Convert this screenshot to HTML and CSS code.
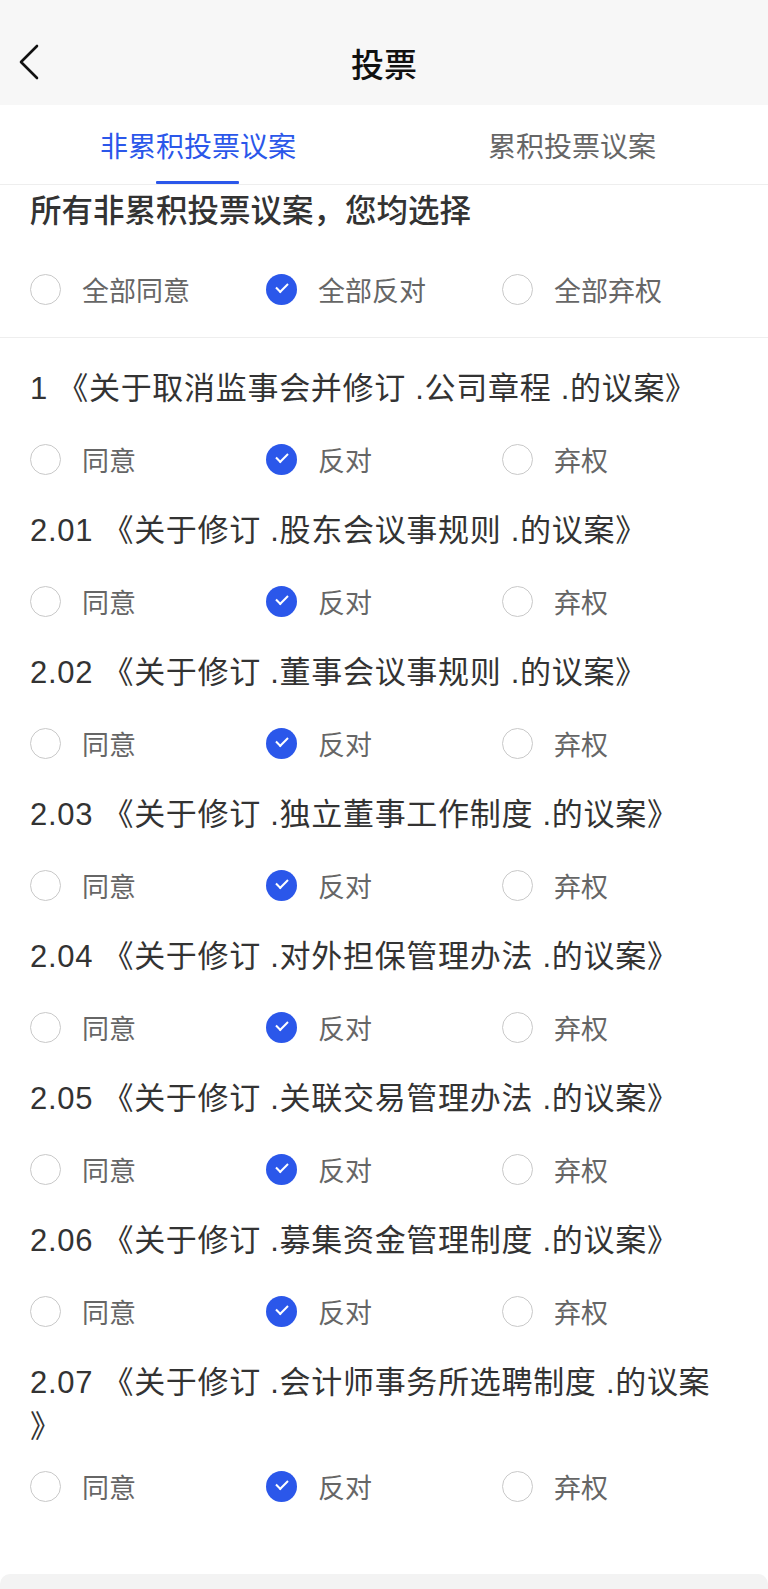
FILE: index.html
```html
<!DOCTYPE html>
<html lang="zh-CN">
<head>
    <meta charset="UTF-8">
    <meta name="viewport" content="width=device-width, initial-scale=1.0">
    <title>投票</title>
    <link rel="stylesheet" href="styles.css">
</head>
<body>
    <header class="nav-bar">
        <button class="back-button" aria-label="返回">
            <svg width="22" height="36" viewBox="0 0 22 36">
                <path d="M19 2 L3 18 L19 34" fill="none" stroke="#111" stroke-width="2.6" stroke-linecap="round" stroke-linejoin="round"/>
            </svg>
        </button>
        <h1>投票</h1>
    </header>

    <nav class="tabs">
        <div class="tab active">非累积投票议案</div>
        <div class="tab">累积投票议案</div>
    </nav>

    <section class="batch">
        <h2>所有非累积投票议案，您均选择</h2>
        <div class="options">
            <label class="option"><span class="radio"></span>全部同意</label>
            <label class="option"><span class="radio checked"></span>全部反对</label>
            <label class="option"><span class="radio"></span>全部弃权</label>
        </div>
    </section>

    <main class="proposal-list">
        <div class="proposal">
            <p class="proposal-title">1 《关于取消监事会并修订 .公司章程 .的议案》</p>
            <div class="options">
                <label class="option"><span class="radio"></span>同意</label>
                <label class="option"><span class="radio checked"></span>反对</label>
                <label class="option"><span class="radio"></span>弃权</label>
            </div>
        </div>
        <div class="proposal">
            <p class="proposal-title">2.01 《关于修订 .股东会议事规则 .的议案》</p>
            <div class="options">
                <label class="option"><span class="radio"></span>同意</label>
                <label class="option"><span class="radio checked"></span>反对</label>
                <label class="option"><span class="radio"></span>弃权</label>
            </div>
        </div>
        <div class="proposal">
            <p class="proposal-title">2.02 《关于修订 .董事会议事规则 .的议案》</p>
            <div class="options">
                <label class="option"><span class="radio"></span>同意</label>
                <label class="option"><span class="radio checked"></span>反对</label>
                <label class="option"><span class="radio"></span>弃权</label>
            </div>
        </div>
        <div class="proposal">
            <p class="proposal-title">2.03 《关于修订 .独立董事工作制度 .的议案》</p>
            <div class="options">
                <label class="option"><span class="radio"></span>同意</label>
                <label class="option"><span class="radio checked"></span>反对</label>
                <label class="option"><span class="radio"></span>弃权</label>
            </div>
        </div>
        <div class="proposal">
            <p class="proposal-title">2.04 《关于修订 .对外担保管理办法 .的议案》</p>
            <div class="options">
                <label class="option"><span class="radio"></span>同意</label>
                <label class="option"><span class="radio checked"></span>反对</label>
                <label class="option"><span class="radio"></span>弃权</label>
            </div>
        </div>
        <div class="proposal">
            <p class="proposal-title">2.05 《关于修订 .关联交易管理办法 .的议案》</p>
            <div class="options">
                <label class="option"><span class="radio"></span>同意</label>
                <label class="option"><span class="radio checked"></span>反对</label>
                <label class="option"><span class="radio"></span>弃权</label>
            </div>
        </div>
        <div class="proposal">
            <p class="proposal-title">2.06 《关于修订 .募集资金管理制度 .的议案》</p>
            <div class="options">
                <label class="option"><span class="radio"></span>同意</label>
                <label class="option"><span class="radio checked"></span>反对</label>
                <label class="option"><span class="radio"></span>弃权</label>
            </div>
        </div>
        <div class="proposal">
            <p class="proposal-title">2.07 《关于修订 .会计师事务所选聘制度 .的议案》</p>
            <div class="options">
                <label class="option"><span class="radio"></span>同意</label>
                <label class="option"><span class="radio checked"></span>反对</label>
                <label class="option"><span class="radio"></span>弃权</label>
            </div>
        </div>
    </main>

    <footer class="bottom-bar"></footer>
</body>
</html>
```

FILE: styles.css
```css
:root {
    --primary-color: #2b57ea;
    --text-color: #333;
    --muted-color: #666;
    --border-color: #eeeeee;
    --radio-border: #c9c9c9;
}

body {
    font-family: "Liberation Sans", "Noto Sans CJK SC", sans-serif;
    margin: 0;
    padding: 0;
    background-color: #fff;
    color: var(--text-color);
    min-height: 100vh;
    display: flex;
    flex-direction: column;
}

.nav-bar {
    height: 105px;
    background-color: #f7f7f7;
    display: flex;
    align-items: center;
    justify-content: center;
    position: relative;
}

.nav-bar h1 {
    margin: 21px 0 0;
    font-size: 33px;
    font-weight: 500;
    color: #111;
}

.back-button {
    position: absolute;
    left: 18px;
    top: 44px;
    background: none;
    border: none;
    padding: 0;
    cursor: pointer;
}

.back-button svg {
    display: block;
}

.tabs {
    display: flex;
    height: 79px;
    border-bottom: 1px solid var(--border-color);
}

.tab {
    flex: 1;
    display: flex;
    align-items: center;
    justify-content: center;
    font-size: 28px;
    color: var(--muted-color);
    position: relative;
    padding-right: 9px;
}

.tab.active {
    color: var(--primary-color);
    padding-left: 11px;
    padding-right: 0;
}

.tab.active::after {
    content: "";
    position: absolute;
    bottom: 0;
    left: 50%;
    width: 83px;
    height: 3px;
    margin-left: -37px;
    background-color: var(--primary-color);
    border-radius: 1px;
}

.batch {
    padding: 4px 30px 25px;
    border-bottom: 1px solid var(--border-color);
}

.batch h2 {
    margin: 0 0 33px;
    font-size: 31.5px;
    line-height: 44px;
    font-weight: 500;
    color: #333;
}

.options {
    display: grid;
    grid-template-columns: repeat(3, 1fr);
    height: 46px;
}

.option {
    display: flex;
    align-items: center;
    gap: 21px;
    font-size: 27px;
    color: var(--muted-color);
    cursor: pointer;
}

.radio {
    width: 31px;
    height: 31px;
    box-sizing: border-box;
    border: 1.5px solid var(--radio-border);
    border-radius: 50%;
    flex-shrink: 0;
    position: relative;
}

.radio.checked {
    border: none;
    background-color: var(--primary-color);
}

.radio.checked::after {
    content: "";
    position: absolute;
    left: 10px;
    top: 9px;
    width: 10px;
    height: 5px;
    border-left: 2.2px solid #fff;
    border-bottom: 2.2px solid #fff;
    transform: rotate(-45deg);
}

.proposal-list {
    padding: 29px 30px 0;
}

.proposal {
    margin-bottom: 27px;
}

.proposal-title {
    margin: 0 0 14px;
    padding-right: 12px;
    min-height: 55px;
    font-size: 31px;
    line-height: 44px;
    letter-spacing: 0.7px;
    color: var(--text-color);
    line-break: anywhere;
}

.bottom-bar {
    margin-top: auto;
    height: 15px;
    background-color: #f3f3f3;
    border-radius: 10px 10px 0 0;
}
```
